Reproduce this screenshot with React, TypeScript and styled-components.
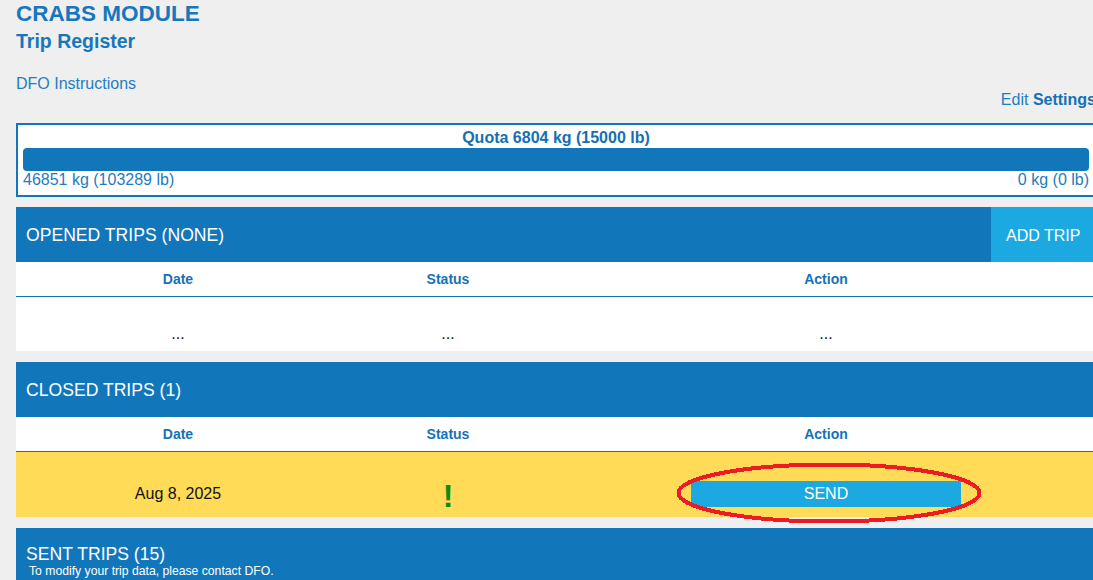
import styled, { createGlobalStyle } from "styled-components";

const GlobalStyle = createGlobalStyle`
  html, body {
    margin: 0;
    padding: 0;
    overflow: hidden;
    background: #efefef;
  }
  body {
    font-family: "Liberation Sans", Arial, sans-serif;
    font-size: 16px;
    color: #000;
  }
`;

const Page = styled.div`
  width: 1080px;
  margin-left: 16px;
  padding-top: 1px;
`;

const ModuleTitle = styled.h1`
  margin: 0;
  font-size: 22.5px;
  line-height: 26px;
  font-weight: 700;
  color: #1777bd;
`;

const PageTitle = styled.h2`
  margin: 2.5px 0 0;
  font-size: 19.5px;
  line-height: 22px;
  font-weight: 700;
  color: #1777bd;
`;

const LinksRow = styled.div`
  margin-top: 23px;
  height: 34px;
  display: flex;
  justify-content: space-between;
`;

const Link = styled.a<{ $end?: boolean }>`
  align-self: ${(p) => (p.$end ? "flex-end" : "flex-start")};
  font-size: 16px;
  line-height: 18px;
  color: #1e7ec3;
  text-decoration: none;

  & > b {
    color: #1570b4;
  }
`;

const QuotaBox = styled.div`
  margin-top: 14.5px;
  border: 2px solid #1276ba;
  background: #fff;
  padding: 4px 5px 6px;
`;

const QuotaTitle = styled.div`
  text-align: center;
  font-weight: 700;
  font-size: 16px;
  line-height: 18px;
  color: #1470b3;
`;

const QuotaBar = styled.div`
  margin-top: 1px;
  height: 23px;
  border-radius: 4px;
  background: #1276ba;
`;

const QuotaLabels = styled.div`
  display: flex;
  justify-content: space-between;
  font-size: 16px;
  line-height: 18px;
  color: #1f7cc0;
`;

const Sections = styled.div`
  margin-top: 10px;
  display: flex;
  flex-direction: column;
  gap: 11px;
`;

const SectionHeader = styled.div`
  display: flex;
  min-height: 55px;
  background: #1276ba;
  color: #fff;
`;

const HeaderText = styled.div<{ $top?: boolean }>`
  flex: 1;
  display: flex;
  flex-direction: column;
  justify-content: ${(p) => (p.$top ? "flex-start" : "center")};
  padding: ${(p) => (p.$top ? "16px 10px 0" : "0 10px")};
`;

const SectionTitle = styled.div`
  font-size: 17.6px;
  line-height: 20px;
`;

const SectionNote = styled.div`
  font-size: 12.2px;
  line-height: 14px;
  padding-left: 3px;
`;

const AddTripButton = styled.button`
  width: 105px;
  border: none;
  background: #1ca9e1;
  color: #fff;
  font-family: inherit;
  font-size: 16px;
  padding: 2px 15px 0;
  text-align: left;
  cursor: pointer;
`;

const Row = styled.div<{ $height: number; $pt: number; $bg?: string }>`
  display: grid;
  grid-template-columns: 30% 20% 50%;
  align-items: start;
  box-sizing: border-box;
  height: ${(p) => p.$height}px;
  padding-top: ${(p) => p.$pt}px;
  background: ${(p) => p.$bg ?? "#fff"};
`;

const HeadRow = styled.div`
  display: grid;
  grid-template-columns: 30% 20% 50%;
  height: 35px;
  box-sizing: border-box;
  background: #fff;
  border-bottom: 1px solid #1276ba;
`;

const HeadCell = styled.div`
  display: flex;
  align-items: center;
  justify-content: center;
  font-size: 14px;
  font-weight: 700;
  color: #1572b6;
`;

const Cell = styled.div<{ $h: number }>`
  position: relative;
  height: ${(p) => p.$h}px;
  display: flex;
  align-items: center;
  justify-content: center;
  font-size: 16px;
  line-height: 18px;
  color: #111;
`;

const StatusMark = styled.span`
  padding-top: 3px;
  font-size: 32px;
  line-height: 26px;
  font-weight: 700;
  color: #0e8c0e;
`;

const SendButton = styled.button`
  width: 50%;
  height: 26px;
  border: none;
  background: #1ca9e1;
  color: #fff;
  font-family: inherit;
  font-size: 16px;
  padding-top: 1px;
  cursor: pointer;
`;

const Highlight = styled.svg`
  position: absolute;
  left: 118px;
  top: -21px;
  overflow: visible;
  pointer-events: none;
  z-index: 2;
`;

const columns = ["Date", "Status", "Action"];

const TableHead = () => (
  <HeadRow>
    {columns.map((c) => (
      <HeadCell key={c}>{c}</HeadCell>
    ))}
  </HeadRow>
);

export default function App() {
  return (
    <>
      <GlobalStyle />
      <Page>
        <ModuleTitle>CRABS MODULE</ModuleTitle>
        <PageTitle>Trip Register</PageTitle>

        <LinksRow>
          <Link href="#">DFO Instructions</Link>
          <Link href="#" $end>
            Edit <b>Settings</b>
          </Link>
        </LinksRow>

        <QuotaBox>
          <QuotaTitle>Quota 6804 kg (15000 lb)</QuotaTitle>
          <QuotaBar />
          <QuotaLabels>
            <span>46851 kg (103289 lb)</span>
            <span>0 kg (0 lb)</span>
          </QuotaLabels>
        </QuotaBox>

        <Sections>
          <div>
            <SectionHeader>
              <HeaderText>
                <SectionTitle>OPENED TRIPS (NONE)</SectionTitle>
              </HeaderText>
              <AddTripButton>ADD TRIP</AddTripButton>
            </SectionHeader>
            <TableHead />
            <Row $height={54} $pt={28}>
              <Cell $h={18}>...</Cell>
              <Cell $h={18}>...</Cell>
              <Cell $h={18}>...</Cell>
            </Row>
          </div>

          <div>
            <SectionHeader>
              <HeaderText>
                <SectionTitle>CLOSED TRIPS (1)</SectionTitle>
              </HeaderText>
            </SectionHeader>
            <TableHead />
            <Row $height={65} $pt={29} $bg="#ffdb58">
              <Cell $h={26}>Aug 8, 2025</Cell>
              <Cell $h={26}>
                <StatusMark>!</StatusMark>
              </Cell>
              <Cell $h={26}>
                <SendButton>SEND</SendButton>
                <Highlight width="310" height="66" shapeRendering="crispEdges">
                  <ellipse cx="155" cy="33" rx="150.5" ry="28.5" fill="none" stroke="#ed1c24" strokeWidth="4" />
                </Highlight>
              </Cell>
            </Row>
          </div>

          <div>
            <SectionHeader>
              <HeaderText $top>
                <SectionTitle>SENT TRIPS (15)</SectionTitle>
                <SectionNote>To modify your trip data, please contact DFO.</SectionNote>
              </HeaderText>
            </SectionHeader>
          </div>
        </Sections>
      </Page>
    </>
  );
}
